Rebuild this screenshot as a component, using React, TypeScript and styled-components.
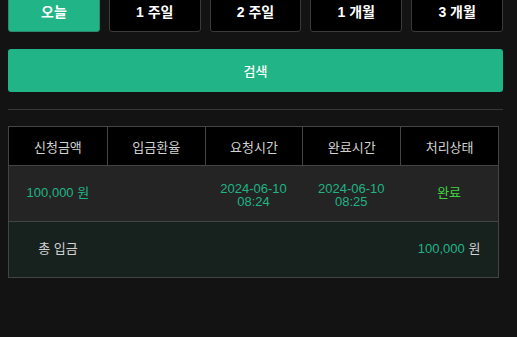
import React, { useState } from 'react';
import styled, { createGlobalStyle } from 'styled-components';

const GlobalStyle = createGlobalStyle`
  html, body {
    margin: 0;
    padding: 0;
    background: #131313;
    font-family: "Liberation Sans", "Noto Sans CJK KR", sans-serif;
  }
`;

const Page = styled.div`
  width: 517px;
  height: 337px;
  overflow: hidden;
  background: #131313;
`;

const Inner = styled.div`
  margin-top: -8px;
  padding: 0 14px 0 8px;
`;

const Periods = styled.div`
  display: grid;
  grid-template-columns: repeat(5, 1fr);
  gap: 9px;
`;

const PeriodButton = styled.button<{ $active?: boolean }>`
  height: 40px;
  border: 1px solid ${(p) => (p.$active ? '#2a8a6a' : '#3a3a3a')};
  border-radius: 3px;
  background: ${(p) => (p.$active ? '#20b486' : '#000')};
  color: #fff;
  font-family: inherit;
  font-size: 14px;
  font-weight: 700;
  padding: 0 0 2px;
  cursor: pointer;
`;

const SearchButton = styled.button`
  display: block;
  width: 100%;
  height: 43px;
  margin-top: 17px;
  border: none;
  border-radius: 3px;
  background: #20b486;
  color: #fff;
  font-family: inherit;
  font-size: 13px;
  font-weight: 500;
  cursor: pointer;
`;

const Divider = styled.hr`
  margin: 17px 0 0;
  border: none;
  border-top: 1px solid #363636;
`;

const Table = styled.div`
  margin-top: 16px;
  margin-right: 4px;
  border: 1px solid #444;
`;

const Row = styled.div<{ $kind: 'head' | 'body' | 'total' }>`
  display: grid;
  grid-template-columns: repeat(5, 1fr);
  align-items: center;
  height: ${(p) => (p.$kind === 'head' ? '38px' : '56px')};
  background: ${(p) =>
    p.$kind === 'head' ? '#000' : p.$kind === 'body' ? '#242424' : '#17211e'};
  border-top: ${(p) => (p.$kind === 'head' ? 'none' : '1px solid #444')};
  box-sizing: border-box;
`;

const HeadCell = styled.div`
  height: 100%;
  display: flex;
  align-items: center;
  justify-content: center;
  color: #d2d2d2;
  font-size: 13px;
  border-left: 1px solid #444;
  &:first-child {
    border-left: none;
  }
`;

const Cell = styled.div<{ $tone?: 'green' | 'lime' | 'gray' }>`
  text-align: center;
  font-size: 13px;
  line-height: 1.1;
  color: ${(p) =>
    p.$tone === 'lime' ? '#3fd43f' : p.$tone === 'gray' ? '#d2d2d2' : '#20b486'};
`;

const DateCell = styled(Cell)`
  padding-top: 2px;
  line-height: 13px;
`;

const Unit = styled.span`
  color: #d2d2d2;
`;

const periods = ['오늘', '1 주일', '2 주일', '1 개월', '3 개월'];
const heads = ['신청금액', '입금환율', '요청시간', '완료시간', '처리상태'];

export default function App() {
  const [active, setActive] = useState(0);
  return (
    <Page>
      <GlobalStyle />
      <Inner>
        <Periods>
          {periods.map((p, i) => (
            <PeriodButton key={p} $active={i === active} onClick={() => setActive(i)}>
              {p}
            </PeriodButton>
          ))}
        </Periods>
        <SearchButton>검색</SearchButton>
        <Divider />
        <Table>
          <Row $kind="head">
            {heads.map((h) => (
              <HeadCell key={h}>{h}</HeadCell>
            ))}
          </Row>
          <Row $kind="body">
            <Cell>100,000 원</Cell>
            <Cell />
            <DateCell>
              2024-06-10
              <br />
              08:24
            </DateCell>
            <DateCell>
              2024-06-10
              <br />
              08:25
            </DateCell>
            <Cell $tone="lime">완료</Cell>
          </Row>
          <Row $kind="total">
            <Cell $tone="gray">총 입금</Cell>
            <Cell />
            <Cell />
            <Cell />
            <Cell>
              100,000 <Unit>원</Unit>
            </Cell>
          </Row>
        </Table>
      </Inner>
    </Page>
  );
}
